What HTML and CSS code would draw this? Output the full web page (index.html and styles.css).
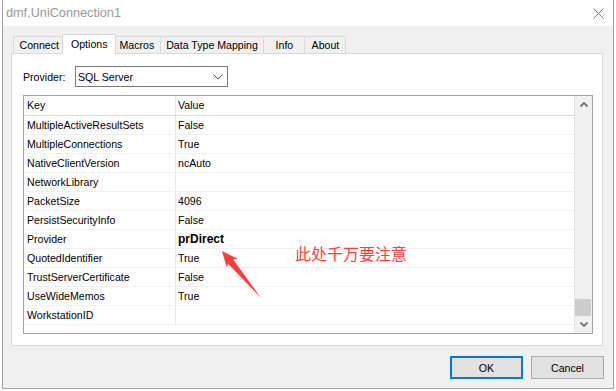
FILE: index.html
```html
<!DOCTYPE html>
<html lang="en">
<head>
    <meta charset="UTF-8">
    <meta name="viewport" content="width=device-width, initial-scale=1.0">
    <title>dmf.UniConnection1</title>
    <link rel="stylesheet" href="styles.css">
</head>
<body>
    <div class="window">
        <div class="titlebar">
            <span class="title">dmf.UniConnection1</span>
            <svg class="close" width="11" height="11" viewBox="0 0 11 11">
                <path d="M0.5 0.5 L10.5 10.5 M10.5 0.5 L0.5 10.5" stroke="#808080" stroke-width="1" fill="none"/>
            </svg>
        </div>

        <div class="client">
            <div class="tabs">
                <div class="tab">Connect</div>
                <div class="tab active">Options</div>
                <div class="tab">Macros</div>
                <div class="tab">Data Type Mapping</div>
                <div class="tab">Info</div>
                <div class="tab">About</div>
            </div>

            <div class="page">
                <div class="provider-row">
                    <label class="provider-label">Provider:</label>
                    <div class="combo">
                        <span>SQL Server</span>
                        <svg class="combo-arrow" width="10" height="6" viewBox="0 0 10 6">
                            <polyline points="0.5,0.5 5,5 9.5,0.5" stroke="#505050" stroke-width="1" fill="none"/>
                        </svg>
                    </div>
                </div>

                <div class="grid">
                    <div class="grid-body">
                        <div class="row header">
                            <div class="key">Key</div>
                            <div class="val">Value</div>
                        </div>
                        <div class="row"><div class="key">MultipleActiveResultSets</div><div class="val">False</div></div>
                        <div class="row"><div class="key">MultipleConnections</div><div class="val">True</div></div>
                        <div class="row"><div class="key">NativeClientVersion</div><div class="val">ncAuto</div></div>
                        <div class="row"><div class="key">NetworkLibrary</div><div class="val"></div></div>
                        <div class="row"><div class="key">PacketSize</div><div class="val">4096</div></div>
                        <div class="row"><div class="key">PersistSecurityInfo</div><div class="val">False</div></div>
                        <div class="row"><div class="key">Provider</div><div class="val changed">prDirect</div></div>
                        <div class="row"><div class="key">QuotedIdentifier</div><div class="val">True</div></div>
                        <div class="row"><div class="key">TrustServerCertificate</div><div class="val">False</div></div>
                        <div class="row"><div class="key">UseWideMemos</div><div class="val">True</div></div>
                        <div class="row"><div class="key">WorkstationID</div><div class="val"></div></div>
                    </div>
                    <div class="scrollbar">
                        <div class="scroll-btn">
                            <svg width="8" height="5" viewBox="0 0 8 5">
                                <polyline points="0.5,4.5 4,1 7.5,4.5" stroke="#606060" stroke-width="1.6" fill="none"/>
                            </svg>
                        </div>
                        <div class="track"><div class="thumb"></div></div>
                        <div class="scroll-btn">
                            <svg width="8" height="5" viewBox="0 0 8 5">
                                <polyline points="0.5,0.5 4,4 7.5,0.5" stroke="#606060" stroke-width="1.6" fill="none"/>
                            </svg>
                        </div>
                    </div>
                </div>
            </div>

            <div class="buttons">
                <button class="btn default">OK</button>
                <button class="btn">Cancel</button>
            </div>
        </div>
    </div>

    <!-- red annotation drawn over the dialog -->
    <svg class="note-arrow" width="616" height="391" viewBox="0 0 616 391">
        <polygon points="222,251 237.6,258.8 233.2,259.4 261,298 227.8,263.6 226.8,267.8" fill="#ff3c3c"/>
    </svg>
    <div class="note">此处千万要注意</div>
</body>
</html>
```

FILE: styles.css
```css
body {
    margin: 0;
    width: 616px;
    height: 391px;
    position: relative;
    overflow: hidden;
    background-color: #fff;
    font-family: "Liberation Sans", Arial, sans-serif;
    font-size: 10.6px;
    color: #000;
}

.window {
    margin-left: 2px;
    width: 612px;
    height: 389px;
    box-sizing: border-box;
    border: 1px solid #a0a0a0;
    border-top: none;
    display: flex;
    flex-direction: column;
}

.titlebar {
    height: 26px;
    flex-shrink: 0;
    background: #fff;
    display: flex;
    align-items: center;
    justify-content: space-between;
    padding: 0 9px 0 3px;
}

.title {
    font-size: 12.7px;
    color: #999;
}

.client {
    flex: 1;
    background: #f0f0f0;
    padding: 0 10px 0 8px;
    display: flex;
    flex-direction: column;
}

.tabs {
    display: flex;
    align-items: flex-end;
    height: 19px;
    margin-top: 8px;
    padding-left: 3px;
}

.tab {
    height: 17px;
    box-sizing: border-box;
    border: 1px solid #d9d9d9;
    border-bottom: none;
    margin-left: -1px;
    padding: 0 5.5px;
    min-width: 42px;
    text-align: center;
    line-height: 16px;
    background: #f0f0f0;
}

.tab.active {
    position: relative;
    z-index: 1;
    height: 20px;
    margin: 0 -2px -1px -3px;
    padding: 0 7.5px;
    line-height: 18px;
    background: #fff;
}

.page {
    height: 293px;
    box-sizing: border-box;
    background: #fff;
    border: 1px solid #d9d9d9;
    padding: 12px 0 0 11px;
}

.provider-row {
    display: flex;
    align-items: center;
}

.provider-label {
    width: 52px;
}

.combo {
    width: 153px;
    height: 21px;
    box-sizing: border-box;
    border: 1px solid #7a7a7a;
    display: flex;
    align-items: center;
    justify-content: space-between;
    padding: 0 4px 0 2px;
}

.grid {
    margin-top: 8px;
    width: 570px;
    height: 239px;
    box-sizing: border-box;
    border: 1px solid #a0a0a0;
    display: flex;
}

.grid-body {
    flex: 1;
}

.row {
    display: flex;
    height: 19px;
    box-sizing: border-box;
    border-bottom: 1px solid #f0f0f0;
    line-height: 18px;
}

.row.header {
    height: 20px;
    line-height: 19px;
    border-bottom-color: #d9d9d9;
}

.key {
    width: 152px;
    flex-shrink: 0;
    box-sizing: border-box;
    border-right: 1px solid #e5e5e5;
    padding-left: 3px;
    white-space: nowrap;
}

.val {
    flex: 1;
    padding-left: 2px;
}

.val.changed {
    font-weight: bold;
    font-size: 12px;
}

.scrollbar {
    width: 18px;
    box-sizing: border-box;
    border-left: 1px solid #e3e3e3;
    background: #f0f0f0;
    display: flex;
    flex-direction: column;
}

.scroll-btn {
    height: 17px;
    display: flex;
    align-items: center;
    justify-content: center;
}

.track {
    flex: 1;
    display: flex;
    flex-direction: column;
    justify-content: flex-end;
}

.thumb {
    height: 17px;
    margin: 0 1px 0 0;
    background: #cdcdcd;
}

.buttons {
    display: flex;
    justify-content: flex-end;
    gap: 8px;
    margin: 10px -1px 0 0;
}

.btn {
    width: 73px;
    height: 23px;
    box-sizing: border-box;
    background: #e1e1e1;
    border: 1px solid #adadad;
    font-family: "Liberation Sans", Arial, sans-serif;
    font-size: 10.6px;
    color: #000;
    padding: 0;
}

.btn.default {
    border: 2px solid #0078d7;
}

.note-arrow {
    position: absolute;
    left: 0;
    top: 0;
    pointer-events: none;
}

.note {
    position: absolute;
    left: 295px;
    top: 245px;
    font-family: "Noto Sans CJK SC", sans-serif;
    font-size: 16px;
    line-height: 16px;
    color: #ff3c3c;
}
```
